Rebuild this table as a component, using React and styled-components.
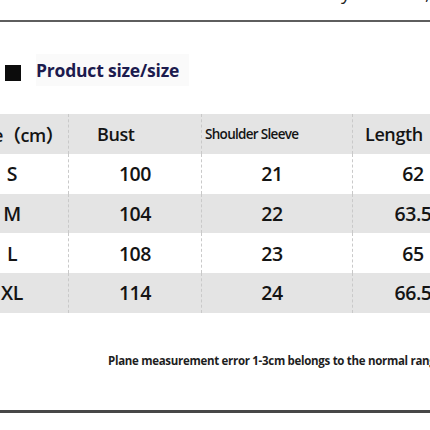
import React from "react";
import styled, { createGlobalStyle } from "styled-components";

const GlobalStyle = createGlobalStyle`
  html, body {
    margin: 0;
    padding: 0;
    background: #ffffff;
  }
  body {
    width: 430px;
    height: 430px;
    overflow: hidden;
    font-family: "Open Sans", "Noto Sans CJK SC", sans-serif;
  }
`;

const Page = styled.div`
  width: 430px;
  height: 430px;
  overflow: hidden;
  display: flex;
  flex-direction: column;
`;

const ClippedTop = styled.div`
  height: 20px;
  overflow: hidden;
`;

const ClippedText = styled.div`
  margin-top: -18px;
  padding-left: 40px;
  white-space: nowrap;
  font-size: 19px;
  line-height: 22px;
  color: #222;
  letter-spacing: 4px;
`;

const Rule = styled.div`
  height: ${(p) => p.$thick}px;
  background: ${(p) => p.$color};
`;

const TitleRow = styled.div`
  display: flex;
  align-items: center;
  gap: 15px;
  margin-top: 32px;
  padding-left: 5px;
`;

const Square = styled.span`
  width: 16px;
  height: 16px;
  background: #0c0c0c;
  margin-top: 6px;
`;

const Title = styled.h2`
  margin: 0;
  padding: 4px 10px 4px 0;
  background: #fafafa;
  font-size: 17.5px;
  font-weight: 700;
  color: #1c1b4e;
  letter-spacing: -0.2px;
  line-height: 24px;
`;

const Table = styled.div`
  display: grid;
  grid-template-columns: 113px 133px 151px 120px;
  grid-auto-rows: 39.75px;
  margin-top: 28px;
  margin-left: -44px;
  width: 517px;
`;

const Cell = styled.div`
  display: flex;
  align-items: center;
  justify-content: ${(p) => (p.$left ? "flex-start" : "center")};
  padding-left: ${(p) => p.$padLeft || 0}px;
  padding-right: ${(p) => p.$padRight || 0}px;
  background: ${(p) => (p.$shade ? "#e4e4e4" : "#ffffff")};
  border-right: ${(p) => (p.$last ? "none" : "1px dashed #c9c9c9")};
  color: #141414;
  font-size: ${(p) => (p.$small ? 13.5 : p.$head ? 18 : 19.5)}px;
  font-weight: 600;
  letter-spacing: ${(p) => (p.$small ? -0.7 : -0.4)}px;
  white-space: nowrap;
  overflow: hidden;
`;

const Note = styled.p`
  margin: 41px 0 0 108px;
  font-size: 11.5px;
  font-weight: 700;
  color: #1e1e1e;
  white-space: nowrap;
  letter-spacing: -0.3px;
  line-height: 14px;
`;

const BottomGap = styled.div`
  height: 42px;
`;

const columns = [
  { head: "Size（cm）", headPad: 10, valPadRight: 0 },
  { head: "Bust", left: true, headPad: 28, valPadRight: 0 },
  { head: "Shoulder Sleeve", left: true, headPad: 3, small: true, valPadRight: 10 },
  { head: "Length", left: true, headPad: 12, valPadRight: 0 },
];

const rows = [
  ["S", "100", "21", "62"],
  ["M", "104", "22", "63.5"],
  ["L", "108", "23", "65"],
  ["XL", "114", "24", "66.5"],
];

export default function App() {
  return (
    <Page>
      <GlobalStyle />
      <ClippedTop>
        <ClippedText>Size data is measured by hand, slight error (1-3cm) is okay</ClippedText>
      </ClippedTop>
      <Rule $thick={2} $color="#5e5e5e" />
      <TitleRow>
        <Square />
        <Title>Product size/size</Title>
      </TitleRow>
      <Table>
        {columns.map((c, i) => (
          <Cell
            key={c.head}
            $shade
            $head
            $left={c.left}
            $padLeft={c.headPad}
            $small={c.small}
            $last={i === columns.length - 1}
          >
            {c.head}
          </Cell>
        ))}
        {rows.map((r, ri) =>
          r.map((v, ci) => (
            <Cell
              key={`${ri}-${ci}`}
              $shade={ri % 2 === 1}
              $padRight={columns[ci].valPadRight}
              $last={ci === r.length - 1}
            >
              {v}
            </Cell>
          ))
        )}
      </Table>
      <Note>Plane measurement error 1-3cm belongs to the normal range</Note>
      <BottomGap />
      <Rule $thick={3} $color="#474747" />
    </Page>
  );
}
